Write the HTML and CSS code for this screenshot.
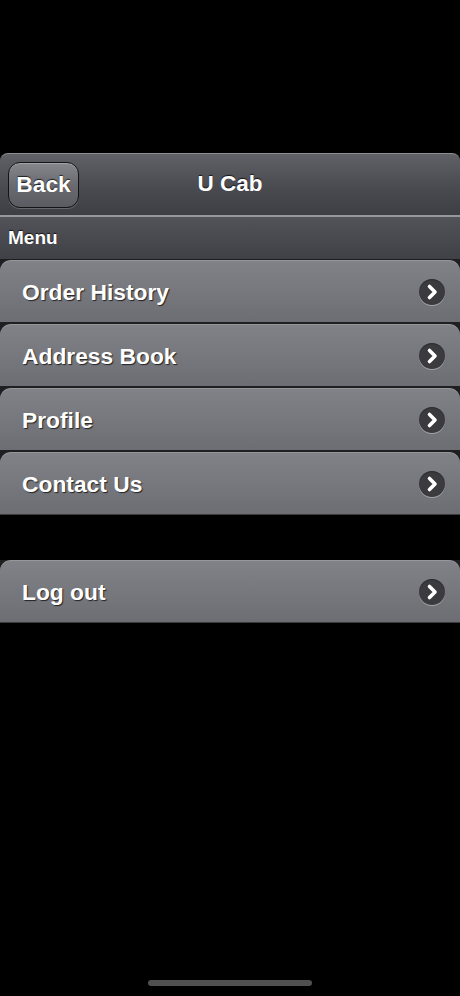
FILE: index.html
```html
<!DOCTYPE html>
<html lang="en">
<head>
<meta charset="utf-8">
<title>U Cab</title>
<link rel="stylesheet" href="styles.css">
</head>
<body>
<div class="screen">
  <header class="header">
    <div class="header-left"><button class="back-btn">Back</button></div>
    <h1 class="title">U Cab</h1>
    <div class="header-right"></div>
  </header>
  <div class="menu-bar">Menu</div>
  <ul class="list">
    <li class="item"><span class="label">Order History</span><span class="chev"><svg viewBox="0 0 26 26" width="26" height="26"><path d="M10.5 7.5 L16 13 L10.5 18.5" fill="none" stroke="#fff" stroke-width="3.6" stroke-linecap="round" stroke-linejoin="round"/></svg></span></li>
    <li class="item"><span class="label">Address Book</span><span class="chev"><svg viewBox="0 0 26 26" width="26" height="26"><path d="M10.5 7.5 L16 13 L10.5 18.5" fill="none" stroke="#fff" stroke-width="3.6" stroke-linecap="round" stroke-linejoin="round"/></svg></span></li>
    <li class="item"><span class="label">Profile</span><span class="chev"><svg viewBox="0 0 26 26" width="26" height="26"><path d="M10.5 7.5 L16 13 L10.5 18.5" fill="none" stroke="#fff" stroke-width="3.6" stroke-linecap="round" stroke-linejoin="round"/></svg></span></li>
    <li class="item"><span class="label">Contact Us</span><span class="chev"><svg viewBox="0 0 26 26" width="26" height="26"><path d="M10.5 7.5 L16 13 L10.5 18.5" fill="none" stroke="#fff" stroke-width="3.6" stroke-linecap="round" stroke-linejoin="round"/></svg></span></li>
  </ul>
  <ul class="list list-logout">
    <li class="item"><span class="label">Log out</span><span class="chev"><svg viewBox="0 0 26 26" width="26" height="26"><path d="M10.5 7.5 L16 13 L10.5 18.5" fill="none" stroke="#fff" stroke-width="3.6" stroke-linecap="round" stroke-linejoin="round"/></svg></span></li>
  </ul>
</div>
<div class="home-indicator"></div>
</body>
</html>
```

FILE: styles.css
```css
html, body {
  margin: 0;
  padding: 0;
  background: #000;
  height: 100%;
}
body {
  font-family: "Liberation Sans", Arial, Helvetica, sans-serif;
  color: #fff;
  position: relative;
  overflow: hidden;
}
.screen {
  padding-top: 153px;
}
.header {
  height: 61px;
  border-top: 1px solid #8d8e93;
  border-radius: 8px 8px 0 0;
  background: linear-gradient(#606166, #4a4b50 55%, #3e3f44);
  display: grid;
  grid-template-columns: 1fr auto 1fr;
  align-items: center;
}
.header-left {
  display: flex;
  align-items: center;
  padding-left: 8px;
}
.back-btn {
  font-family: inherit;
  font-weight: bold;
  font-size: 22.8px;
  color: #fff;
  text-shadow: 0 -1px 1px rgba(0,0,0,0.75);
  width: 71px;
  height: 46px;
  padding: 0;
  margin-top: 0;
  border: 1.5px solid #141416;
  border-radius: 12px;
  background: linear-gradient(#86878c, #6a6b70 50%, #5b5c61);
  box-shadow: inset 0 1px 0 rgba(255,255,255,0.25), 0 1px 0 rgba(255,255,255,0.2);
}
.title {
  margin: 0 0 2px 0;
  font-size: 22.5px;
  font-weight: bold;
  text-shadow: 0 -1px 1px rgba(0,0,0,0.75);
}
.menu-bar {
  height: 42px;
  border-top: 2px solid #97989c;
  border-bottom: 1px solid #1d1d1f;
  background: linear-gradient(#525358, #404146);
  font-size: 19px;
  font-weight: bold;
  line-height: 42px;
  padding-left: 8px;
  text-shadow: 0 -1px 1px rgba(0,0,0,0.75);
}
.list {
  list-style: none;
  margin: 0;
  padding: 0;
  background: #1f1f21;
}
.list-logout {
  margin-top: 45px;
}
.item {
  height: 61px;
  border-top: 1px solid #96979b;
  border-bottom: 2px solid #1f1f21;
  border-radius: 11px 11px 0 0;
  background: linear-gradient(#818287, #77787d 50%, #6d6e73);
  display: flex;
  align-items: center;
  justify-content: space-between;
  padding: 0 15px 0 22px;
}
.list .item:last-child {
  border-bottom: 1px solid #3a3a3d;
}
.label {
  font-size: 22.8px;
  font-weight: bold;
  padding-top: 1px;
  text-shadow: 1px 1px 1px rgba(0,0,0,0.7);
}
.chev {
  width: 26px;
  height: 26px;
  border-radius: 50%;
  background: #3b3b3f;
  box-shadow: 0 1px 0 rgba(255,255,255,0.35), inset 0 1px 1px rgba(0,0,0,0.3);
  display: flex;
}
.home-indicator {
  position: absolute;
  left: 148px;
  top: 980px;
  width: 164px;
  height: 6px;
  border-radius: 3px;
  background: #505050;
}
```
